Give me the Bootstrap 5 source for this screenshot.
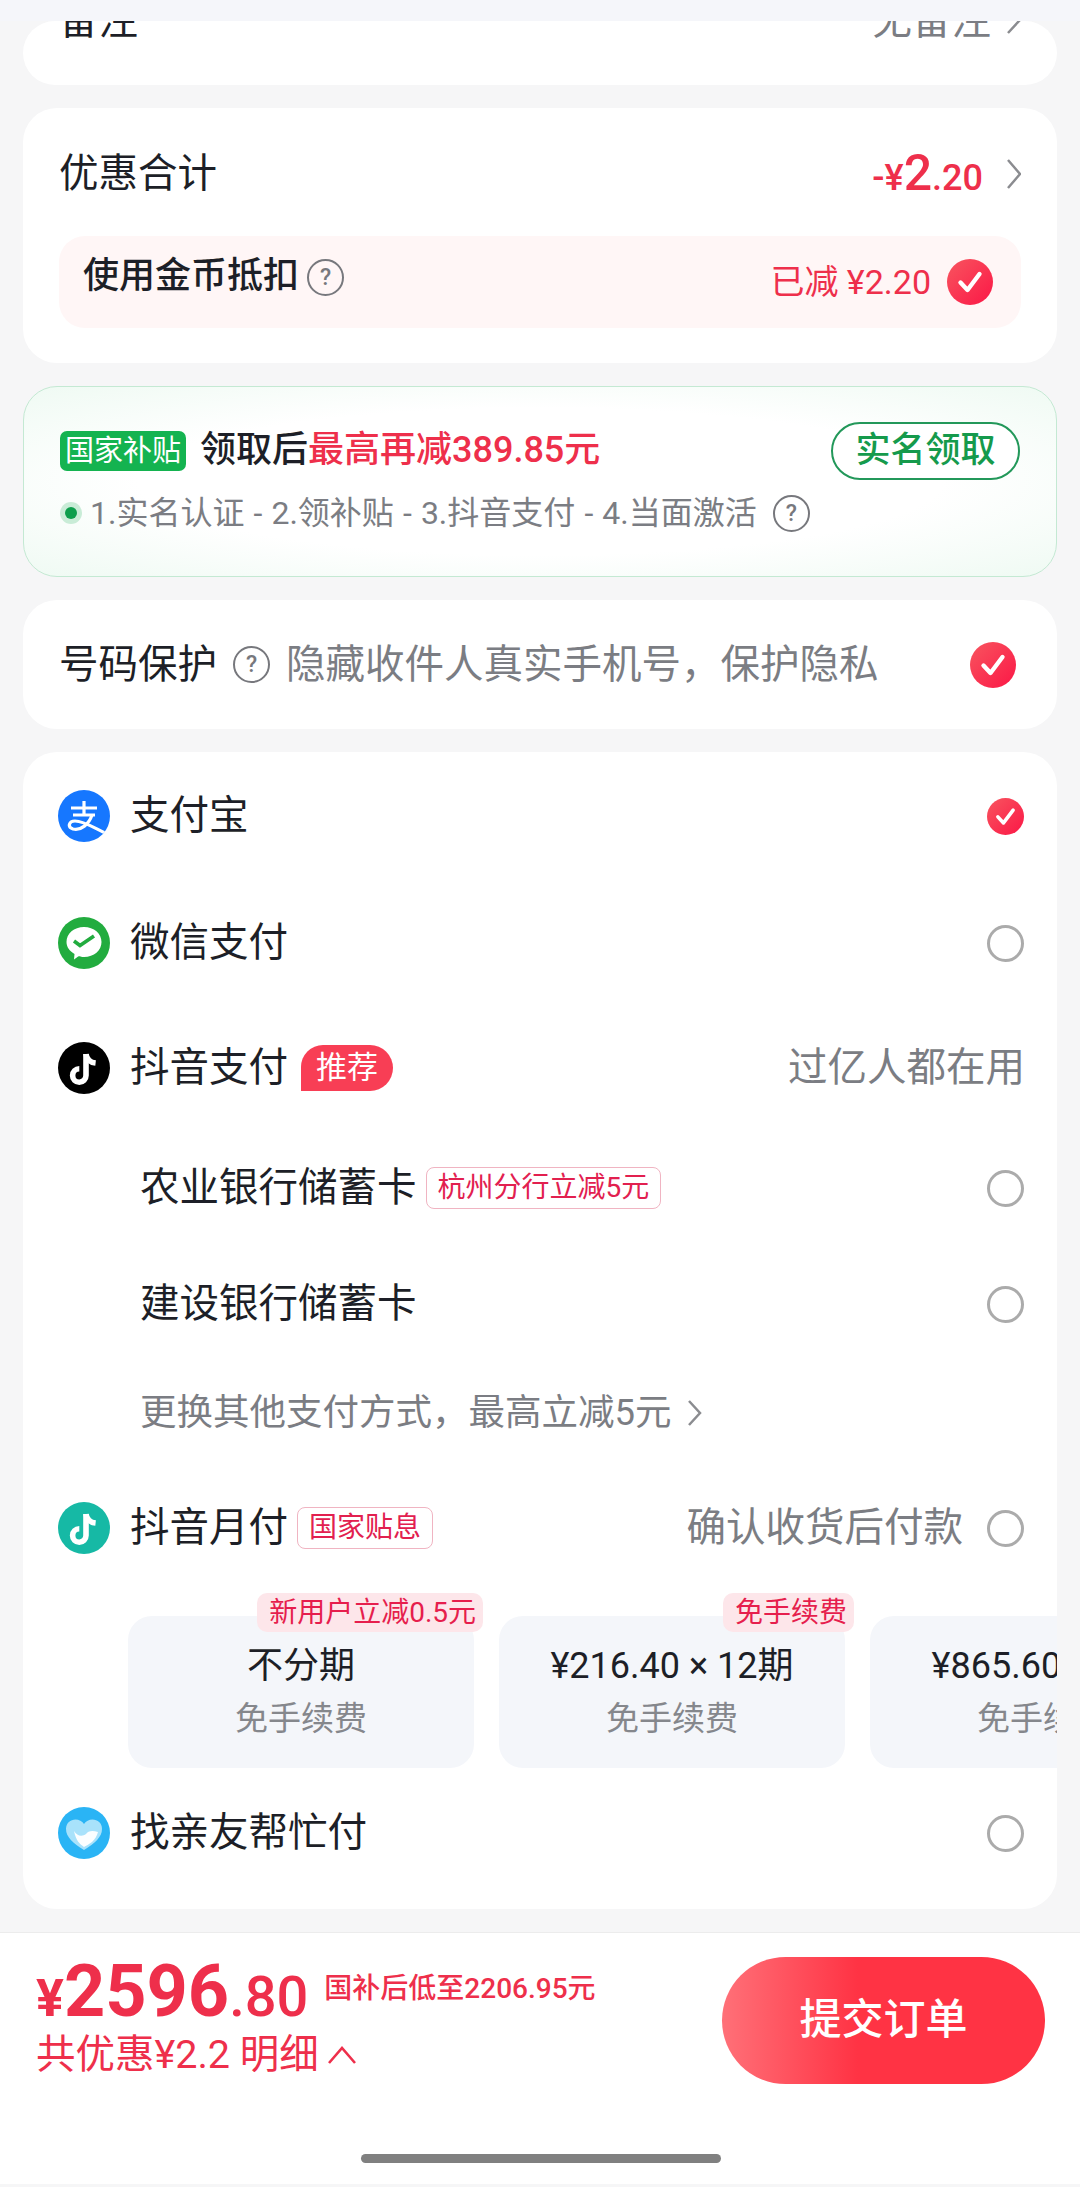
<!DOCTYPE html>
<html lang="zh-CN">
<head>
    <meta charset="UTF-8">
    <meta name="viewport" content="width=device-width, initial-scale=1.0">
    <title>确认订单</title>
    <link href="https://cdn.jsdelivr.net/npm/bootstrap@5.3.0/dist/css/bootstrap.min.css" rel="stylesheet">
    <style>
        body {
            height: 2187px;
            overflow: hidden;
            background-color: #f6f6f7;
            color: #1d1f27;
            font-family: Roboto, "Noto Sans CJK SC", sans-serif;
            font-size: 39.5px;
            line-height: 1.2;
        }
        .status-strip { height: 21px; background: #f5f6fa; position: relative; z-index: 1; }
        .sheet {
            margin: 0 23px 23px;
            background: #fff;
            border-radius: 34px;
            overflow: hidden;
        }
        .txt-gray { color: #7b7d83; }
        .txt-red { color: #ee2f4b; }
        .chev { flex-shrink: 0; fill: none; stroke: #8b8c90; stroke-width: 2.5; }

        /* remark card, scrolled under the top strip */
        .remark-card { height: 64px; margin-top: 0; padding: 0 36px; }
        .remark-row { margin-top: -22px; height: 44px; }

        /* discount card */
        .discount-card { height: 255px; padding: 0 36px; }
        .discount-head { height: 128px; padding-top: 4px; }
        .amount-sign { font-size: 36px; font-weight: 500; }
        .amount-big { font-size: 50px; font-weight: 500; line-height: 1; }
        .amount-dec { font-size: 36px; font-weight: 500; }
        .coin-row { height: 92px; background: #fff6f6; border-radius: 26px; padding: 0 28px 0 24px; }
        .coin-label { font-size: 36px; font-weight: 500; margin-top: -10px; }
        .coin-used { font-size: 34px; color: #ee2f4b; }
        .help-dot {
            display: inline-flex;
            align-items: center;
            justify-content: center;
            flex-shrink: 0;
            width: 37px;
            height: 37px;
            border: 2.5px solid #77787d;
            border-radius: 50%;
            color: #77787d;
            font-size: 23px;
            font-weight: 500;
            line-height: 1;
        }

        /* subsidy card */
        .subsidy-card {
            height: 191px;
            padding: 35px 36px 0;
            border: 1.5px solid #c4e9d3;
            background: radial-gradient(ellipse at center, #fff 55%, #effaf3 100%);
        }
        .subsidy-tag {
            background: #14b350;
            color: #fff;
            font-size: 29px;
            border-radius: 7px;
            width: 126px;
            height: 40px;
            white-space: nowrap;
        }
        .subsidy-title { font-size: 36px; font-weight: 500; margin-left: 14px; white-space: nowrap; }
        .subsidy-btn {
            width: 189px;
            height: 58px;
            border: 2px solid #23985a;
            border-radius: 29px;
            color: #159a4c;
            font-size: 35px;
            font-weight: 500;
            background: #fff;
        }
        .step-row { margin-top: 14px; font-size: 32px; color: #7b7d83; white-space: nowrap; }
        .step-dot {
            width: 22px;
            height: 22px;
            border-radius: 50%;
            background: #c9ecd7;
            margin-right: 8px;
            display: flex;
            align-items: center;
            justify-content: center;
        }
        .step-dot::after { content: ""; width: 12px; height: 12px; border-radius: 50%; background: #0d9e4c; }
        .step-sep { display: inline-block; width: 27px; text-align: center; }

        /* number protection */
        .protect-card { height: 129px; padding: 0 41px 0 36px; }

        /* payment list */
        .pay-card { height: 1157px; padding: 34px 32px 0 35px; position: relative; }
        .pay-row { height: 60px; }
        .pay-icon { width: 52px; height: 52px; flex-shrink: 0; margin-right: 20px; }
        .radio-off { width: 37px; height: 37px; border: 3px solid #ababab; border-radius: 50%; flex-shrink: 0; margin-right: 1px; }
        .radio-on { width: 37px; height: 37px; flex-shrink: 0; margin-right: 1px; }
        .gap-wechat { margin-top: 67px; }
        .gap-douyin { margin-top: 65px; }
        .gap-abc { margin-top: 60px; }
        .gap-ccb { margin-top: 56px; }
        .gap-more { margin-top: 49px; }
        .gap-month { margin-top: 55px; }
        .gap-family { margin-top: 35px; }
        .indent-row { padding-left: 82px; }
        .rec-tag {
            background: #f83e55;
            color: #fff;
            font-size: 31px;
            width: 92px;
            height: 46px;
            margin-left: 13px;
            border-radius: 22px 23px 23px 0;
        }
        .outline-tag {
            border: 1.5px solid #f0b4c2;
            border-radius: 8px;
            color: #e2204f;
            font-size: 28px;
            height: 42px;
            padding: 0 11px;
            margin-left: 9px;
            white-space: nowrap;
        }
        .more-link { font-size: 36.5px; }
        .plan-strip { margin-top: 35px; margin-right: -32px; padding: 23px 0 0 70px; gap: 25px; overflow: hidden; }
        .plan-item {
            position: relative;
            flex: 0 0 346px;
            height: 152px;
            background: #f4f6fa;
            border-radius: 24px;
            text-align: center;
            padding-top: 26px;
            white-space: nowrap;
        }
        .plan-main { font-size: 36px; line-height: 48px; }
        .plan-sub { font-size: 33px; line-height: 44px; margin-top: 7px; color: #85878c; }
        .plan-cut { overflow: hidden; }
        .plan-badge {
            position: absolute;
            top: -23px;
            right: -9px;
            height: 39px;
            padding: 0 7px 0 12px;
            background: #fde6ea;
            color: #e61e4d;
            font-size: 28px;
            line-height: 39px;
            border-radius: 10px;
        }

        /* bottom bar */
        .bottom-bar { height: 252px; background: #fff; border-top: 1px solid #ececec; padding: 24px 35px 0 36px; }
        .price-line { height: 70px; white-space: nowrap; }
        .price-yen { font-size: 52px; font-weight: 700; }
        .price-main { font-size: 72px; font-weight: 700; line-height: 70px; }
        .price-dec { font-size: 56px; font-weight: 500; }
        .price-note { font-size: 28px; font-weight: 500; margin-left: 16px; transform: translateY(-18px); }
        .saved-line { font-size: 39.5px; white-space: nowrap; margin-top: 4px; }
        .submit-btn {
            width: 323px;
            height: 127px;
            border: 0;
            border-radius: 64px;
            color: #fff;
            font-size: 42px;
            font-weight: 500;
            background: linear-gradient(90deg, #ff7078 0%, #ff3344 42%, #ff3344 100%);
        }
        .home-bar { width: 360px; height: 9px; margin: 70px auto 0; background: #808080; border-radius: 5px; }
    </style>
</head>
<body>
<svg width="0" height="0" class="position-absolute">
    <defs>
        <linearGradient id="checkGrad" x1="0" y1="0" x2="1" y2="1">
            <stop offset="0" stop-color="#f8555f"/>
            <stop offset="1" stop-color="#fb1746"/>
        </linearGradient>
    </defs>
    <symbol id="icoCheck" viewBox="0 0 46 46">
        <circle cx="23" cy="23" r="23" fill="url(#checkGrad)"/>
        <path d="M13.5 23.5l7 7.5 12-16" fill="none" stroke="#fff" stroke-width="4.4" stroke-linecap="round" stroke-linejoin="round"/>
    </symbol>
    <symbol id="icoNote" viewBox="0 0 52 52">
        <path d="M28 12v21.5a6.7 6.7 0 1 1-6.7-6.7" fill="none" stroke="#fff" stroke-width="5.6"/>
        <path d="M28 12c.6 5 4 8.4 9.6 9" fill="none" stroke="#fff" stroke-width="5.6"/>
    </symbol>
</svg>

<div class="status-strip"></div>

<div class="sheet remark-card">
    <div class="remark-row d-flex align-items-center justify-content-between">
        <span>备注</span>
        <span class="d-flex align-items-center txt-gray">无备注
            <svg class="chev ms-3" width="14" height="28" viewBox="0 0 14 28"><path d="M1 2l11 12-11 12"/></svg>
        </span>
    </div>
</div>

<div class="sheet discount-card">
    <div class="discount-head d-flex align-items-center justify-content-between">
        <span>优惠合计</span>
        <span class="d-flex align-items-center">
            <span class="txt-red"><span class="amount-sign">-¥</span><span class="amount-big">2</span><span class="amount-dec">.20</span></span>
            <svg class="chev ms-4" width="14" height="32" viewBox="0 0 14 32"><path d="M1 2l12 14-12 14"/></svg>
        </span>
    </div>
    <div class="coin-row d-flex align-items-center justify-content-between">
        <span class="d-flex align-items-center gap-2 coin-label">使用金币抵扣<span class="help-dot">?</span></span>
        <span class="d-flex align-items-center">
            <span class="coin-used">已减 ¥2.20</span>
            <svg class="ms-3" width="46" height="46"><use href="#icoCheck"/></svg>
        </span>
    </div>
</div>

<div class="sheet subsidy-card">
    <div class="d-flex align-items-center justify-content-between">
        <div class="d-flex align-items-center">
            <span class="subsidy-tag d-flex align-items-center justify-content-center">国家补贴</span>
            <span class="subsidy-title">领取后<span class="txt-red">最高再减389.85元</span></span>
        </div>
        <div class="subsidy-btn d-flex align-items-center justify-content-center">实名领取</div>
    </div>
    <div class="step-row d-flex align-items-center">
        <span class="step-dot"></span>
        <span>1.实名认证<span class="step-sep">-</span>2.领补贴<span class="step-sep">-</span>3.抖音支付<span class="step-sep">-</span>4.当面激活</span>
        <span class="help-dot ms-3">?</span>
    </div>
</div>

<div class="sheet protect-card d-flex align-items-center">
    <span>号码保护</span>
    <span class="help-dot mx-3">?</span>
    <span class="txt-gray flex-grow-1 text-nowrap">隐藏收件人真实手机号，保护隐私</span>
    <svg width="46" height="46"><use href="#icoCheck"/></svg>
</div>

<div class="sheet pay-card">
    <div class="pay-row d-flex align-items-center">
        <svg class="pay-icon" viewBox="0 0 52 52">
            <defs><clipPath id="aliClip"><circle cx="26" cy="26" r="26"/></clipPath></defs>
            <circle cx="26" cy="26" r="26" fill="#1677ff"/>
            <g clip-path="url(#aliClip)" fill="none" stroke="#fff" stroke-width="3.2">
                <path d="M13 18h26M26 11v14M15 25h22"/>
                <path d="M34 25c-3 9-11 16-19 14-6-2-4-8 2-8 10 0 22 9 35 14"/>
            </g>
        </svg>
        <span class="flex-grow-1">支付宝</span>
        <svg class="radio-on"><use href="#icoCheck"/></svg>
    </div>
    <div class="pay-row gap-wechat d-flex align-items-center">
        <svg class="pay-icon" viewBox="0 0 52 52">
            <circle cx="26" cy="26" r="26" fill="#22ac3f"/>
            <path d="M26 10c10 0 17.500 6.500 17.500 15S36 40 26 40c-2 0-3.500-.2-5.500-.8L16 42.500l.5-5.500C11.500 34 8.500 30 8.500 25 8.500 16.500 16 10 26 10z" fill="#fff"/>
            <path d="M16 24l6 4.500L36 19" fill="none" stroke="#22ac3f" stroke-width="3.600"/>
        </svg>
        <span class="flex-grow-1">微信支付</span>
        <span class="radio-off"></span>
    </div>
    <div class="pay-row gap-douyin d-flex align-items-center">
        <svg class="pay-icon" viewBox="0 0 52 52">
            <circle cx="26" cy="26" r="26" fill="#000"/>
            <use href="#icoNote"/>
        </svg>
        <span>抖音支付</span>
        <span class="rec-tag d-flex align-items-center justify-content-center">推荐</span>
        <span class="txt-gray ms-auto">过亿人都在用</span>
    </div>
    <div class="pay-row gap-abc indent-row d-flex align-items-center">
        <span>农业银行储蓄卡</span>
        <span class="outline-tag d-flex align-items-center">杭州分行立减5元</span>
        <span class="radio-off ms-auto"></span>
    </div>
    <div class="pay-row gap-ccb indent-row d-flex align-items-center">
        <span>建设银行储蓄卡</span>
        <span class="radio-off ms-auto"></span>
    </div>
    <div class="pay-row gap-more indent-row d-flex align-items-center txt-gray more-link">
        <span>更换其他支付方式，最高立减5元</span>
        <svg class="chev ms-3" width="14" height="28" viewBox="0 0 14 28"><path d="M1 2l11 12-11 12"/></svg>
    </div>
    <div class="pay-row gap-month d-flex align-items-center">
        <svg class="pay-icon" viewBox="0 0 52 52">
            <circle cx="26" cy="26" r="26" fill="#16b9a5"/>
            <use href="#icoNote"/>
        </svg>
        <span>抖音月付</span>
        <span class="outline-tag d-flex align-items-center tag-wide">国家贴息</span>
        <span class="txt-gray ms-auto me-4">确认收货后付款</span>
        <span class="radio-off"></span>
    </div>
    <div class="plan-strip d-flex">
        <div class="plan-item">
            <span class="plan-badge">新用户立减0.5元</span>
            <div class="plan-main">不分期</div>
            <div class="plan-sub">免手续费</div>
        </div>
        <div class="plan-item">
            <span class="plan-badge">免手续费</span>
            <div class="plan-main">¥216.40 × 12期</div>
            <div class="plan-sub">免手续费</div>
        </div>
        <div class="plan-item">
            <div class="plan-main">¥865.60 × 3期</div>
            <div class="plan-sub">免手续费</div>
        </div>
    </div>
    <div class="pay-row gap-family d-flex align-items-center">
        <svg class="pay-icon" viewBox="0 0 52 52">
            <circle cx="26" cy="26" r="26" fill="#2ab4f5"/>
            <path d="M26 43C15 36 8 30 8 22c0-6 4.500-9.500 9.500-9.500 3.500 0 6.500 1.500 8.500 4.500 2-3 5-4.500 8.500-4.500 5 0 9.500 3.500 9.500 9.500 0 8-7 14-18 21z" fill="#a8e2fb"/>
            <path d="M16 24c3 5 8 6 12 3 2-3 6-4 12-2-1 4-3 7-6 10-3 2-6 4-8 5-4-3-8-6-10-16z" fill="#fff" opacity=".95"/>
            <path d="M27 30c2-4 6-5 9-4-1 4-3 7-6 9z" fill="#a8e2fb" opacity="0"/>
        </svg>
        <span class="flex-grow-1">找亲友帮忙付</span>
        <span class="radio-off"></span>
    </div>
</div>

<div class="bottom-bar">
    <div class="d-flex justify-content-between">
        <div class="txt-red">
            <div class="price-line d-flex align-items-baseline">
                <span class="price-yen">¥</span><span class="price-main">2596</span><span class="price-dec">.80</span>
                <span class="price-note">国补后低至2206.95元</span>
            </div>
            <div class="saved-line d-flex align-items-center">共优惠¥2.2 明细
                <svg class="ms-2" width="30" height="20" viewBox="0 0 30 20" fill="none" stroke="#ee2f4b" stroke-width="2.6"><path d="M2 18L15 3l13 15"/></svg>
            </div>
        </div>
        <button class="submit-btn" type="button">提交订单</button>
    </div>
    <div class="home-bar"></div>
</div>

<script src="https://cdn.jsdelivr.net/npm/bootstrap@5.3.0/dist/js/bootstrap.bundle.min.js"></script>
</body>
</html>
